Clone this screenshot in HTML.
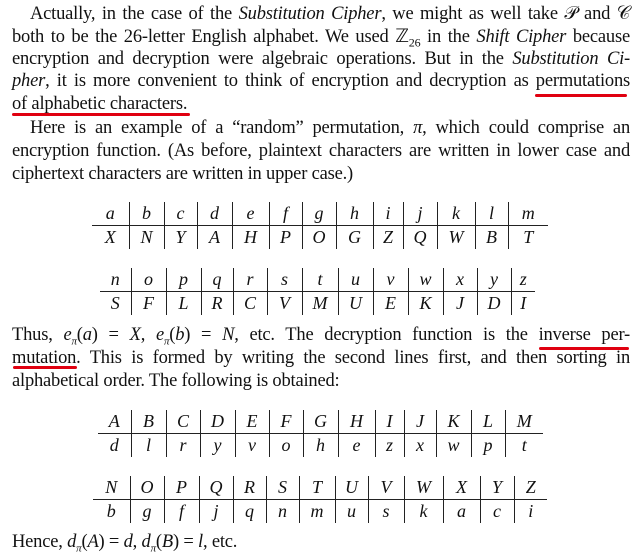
<!DOCTYPE html>
<html><head><meta charset="utf-8"><style>
body{margin:0;width:640px;height:559px;background:#fff;position:relative;overflow:hidden;font-family:"Liberation Serif",serif;color:#111}
.l{position:absolute;left:12px;width:618px;height:22px;line-height:22px;font-size:18.5px;text-align:justify;text-align-last:justify;white-space:nowrap;letter-spacing:-0.2px}
.l.n{text-align-last:left}
.ind{left:30px;width:600px}
.r{position:absolute;height:3px;background:#e00010;border-radius:2px}
table{position:absolute;border-collapse:collapse;font-style:italic;font-size:18px}
td{text-align:center;padding:0;height:23px;line-height:23px;border-left:1.5px solid #222}
td:first-child{border-left:none}
tr:first-child td{border-bottom:1.5px solid #222;vertical-align:bottom}
tr:last-child td{vertical-align:top}
sub{font-size:11px}
</style></head><body>
<div class="l ind" style="top:3px">Actually, in the case of the <i>Substitution Cipher</i>, we might as well take 𝒫 and 𝒞</div>
<div class="l" style="top:26px">both to be the 26-letter English alphabet. We used ℤ<sub style="font-size:12px">26</sub> in the <i>Shift Cipher</i> because</div>
<div class="l" style="top:48px">encryption and decryption were algebraic operations. But in the <i>Substitution Ci-</i></div>
<div class="l" style="top:70px"><i>pher</i>, it is more convenient to think of encryption and decryption as permutations</div>
<div class="l n" style="top:93px">of alphabetic characters.</div>
<div class="l ind" style="top:117px">Here is an example of a “random” permutation, <i>π</i>, which could comprise an</div>
<div class="l" style="top:140px">encryption function. (As before, plaintext characters are written in lower case and</div>
<div class="l n" style="top:163px">ciphertext characters are written in upper case.)</div>
<div class="r" style="left:535px;top:94px;width:92px"></div>
<div class="r" style="left:12px;top:113px;width:178px"></div>

<table style="left:92px;top:202px"><colgroup><col style="width:37px"><col style="width:35px"><col style="width:33px"><col style="width:35px"><col style="width:37px"><col style="width:33px"><col style="width:34px"><col style="width:37px"><col style="width:30px"><col style="width:34px"><col style="width:38px"><col style="width:33px"><col style="width:40px"></colgroup>
<tr><td>a</td><td>b</td><td>c</td><td>d</td><td>e</td><td>f</td><td>g</td><td>h</td><td>i</td><td>j</td><td>k</td><td>l</td><td>m</td></tr>
<tr><td>X</td><td>N</td><td>Y</td><td>A</td><td>H</td><td>P</td><td>O</td><td>G</td><td>Z</td><td>Q</td><td>W</td><td>B</td><td>T</td></tr></table>

<table style="left:100px;top:268px"><colgroup><col style="width:31px"><col style="width:35px"><col style="width:35px"><col style="width:32px"><col style="width:34px"><col style="width:35px"><col style="width:36px"><col style="width:35px"><col style="width:35px"><col style="width:35px"><col style="width:34px"><col style="width:34px"><col style="width:24px"></colgroup>
<tr><td>n</td><td>o</td><td>p</td><td>q</td><td>r</td><td>s</td><td>t</td><td>u</td><td>v</td><td>w</td><td>x</td><td>y</td><td>z</td></tr>
<tr><td>S</td><td>F</td><td>L</td><td>R</td><td>C</td><td>V</td><td>M</td><td>U</td><td>E</td><td>K</td><td>J</td><td>D</td><td>I</td></tr></table>

<div class="l" style="top:324px">Thus, <i>e<sub>π</sub></i>(<i>a</i>) = <i>X</i>, <i>e<sub>π</sub></i>(<i>b</i>) = <i>N</i>, etc. The decryption function is the inverse per-</div>
<div class="l" style="top:347px">mutation. This is formed by writing the second lines first, and then sorting in</div>
<div class="l n" style="top:370px">alphabetical order. The following is obtained:</div>
<div class="r" style="left:539px;top:347px;width:90px"></div>
<div class="r" style="left:13px;top:366px;width:64px"></div>

<table style="left:98px;top:410px"><colgroup><col style="width:33px"><col style="width:35px"><col style="width:34px"><col style="width:35px"><col style="width:34px"><col style="width:34px"><col style="width:35px"><col style="width:37px"><col style="width:29px"><col style="width:32px"><col style="width:35px"><col style="width:34px"><col style="width:38px"></colgroup>
<tr><td>A</td><td>B</td><td>C</td><td>D</td><td>E</td><td>F</td><td>G</td><td>H</td><td>I</td><td>J</td><td>K</td><td>L</td><td>M</td></tr>
<tr><td>d</td><td>l</td><td>r</td><td>y</td><td>v</td><td>o</td><td>h</td><td>e</td><td>z</td><td>x</td><td>w</td><td>p</td><td>t</td></tr></table>

<table style="left:93px;top:476px"><colgroup><col style="width:37px"><col style="width:34px"><col style="width:35px"><col style="width:34px"><col style="width:33px"><col style="width:33px"><col style="width:36px"><col style="width:33px"><col style="width:36px"><col style="width:39px"><col style="width:37px"><col style="width:34px"><col style="width:33px"></colgroup>
<tr><td>N</td><td>O</td><td>P</td><td>Q</td><td>R</td><td>S</td><td>T</td><td>U</td><td>V</td><td>W</td><td>X</td><td>Y</td><td>Z</td></tr>
<tr><td>b</td><td>g</td><td>f</td><td>j</td><td>q</td><td>n</td><td>m</td><td>u</td><td>s</td><td>k</td><td>a</td><td>c</td><td>i</td></tr></table>

<div class="l n" style="top:531px">Hence, <i>d<sub>π</sub></i>(<i>A</i>) = <i>d</i>, <i>d<sub>π</sub></i>(<i>B</i>) = <i>l</i>, etc.</div>
</body></html>
